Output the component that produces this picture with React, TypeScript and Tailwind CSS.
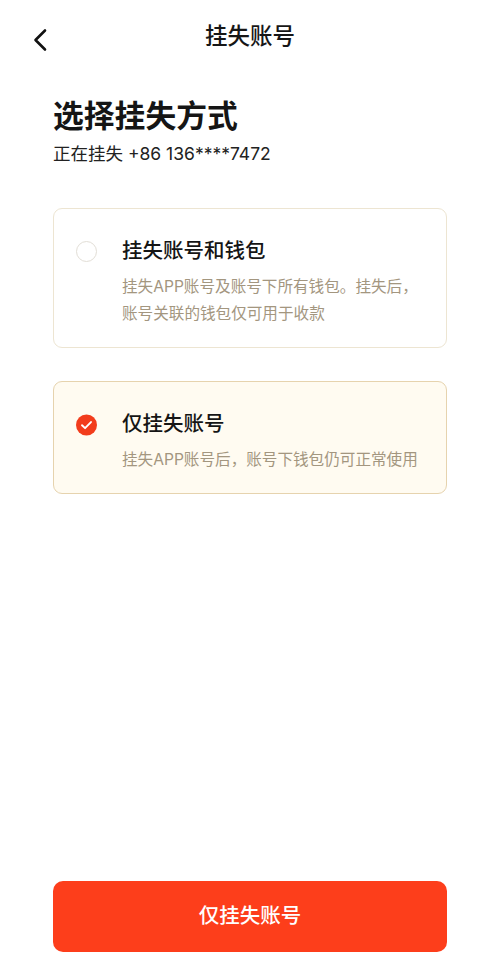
import React, { useState } from 'react'

const font = { fontFamily: 'Inter, "Noto Sans CJK SC", "Noto Sans", sans-serif' }

interface OptionProps {
  title: string
  lines: string[]
  checked: boolean
  onClick: () => void
}

function Option({ title, lines, checked, onClick }: OptionProps) {
  return (
    <button
      type="button"
      onClick={onClick}
      className={`flex w-full items-start rounded-[9px] border pl-[22px] pr-4 pt-[28px] pb-[20px] text-left ${
        checked ? 'border-[#e6d3ae] bg-[#fffbf1]' : 'border-[#ede5d2] bg-white'
      }`}
    >
      <div className="mt-[4px] flex h-[21px] w-[21px] shrink-0 items-center justify-center">
        {checked ? (
          <svg viewBox="0 0 22 22" className="h-[22px] w-[22px]">
            <circle cx="11" cy="11" r="11" fill="#f23c1c" />
            <path d="M6.3 11.2l3.2 3.1 6.2-6.4" fill="none" stroke="#fff" strokeWidth="2" strokeLinecap="round" strokeLinejoin="round" />
          </svg>
        ) : (
          <span className="h-[21px] w-[21px] rounded-full border-[1.5px] border-[#e2ded6]" />
        )}
      </div>
      <div className="ml-[25px] flex flex-col">
        <p className="text-[20.5px] font-medium leading-[28px] text-[#151515]">{title}</p>
        <div className="mt-[8px] text-[15.6px] leading-[27px] text-[#a3967f]">
          {lines.map((l) => (
            <p key={l} className="whitespace-nowrap">{l}</p>
          ))}
        </div>
      </div>
    </button>
  )
}

export default function App() {
  const [mode, setMode] = useState<'all' | 'account'>('account')

  return (
    <div className="flex h-[971px] w-[500px] flex-col bg-white" style={font}>
      {/* nav bar */}
      <div className="relative flex h-[75px] items-center justify-center pb-[4px]">
        <button type="button" className="absolute left-[28px] top-[24px] p-1">
          <svg viewBox="0 0 16 24" className="h-[24px] w-[16px]">
            <path d="M13 2.5L3.5 12l9.5 9.5" fill="none" stroke="#111" strokeWidth="2.6" strokeLinecap="round" strokeLinejoin="round" />
          </svg>
        </button>
        <h1 className="text-[22.5px] font-medium text-[#161616]">挂失账号</h1>
      </div>

      <div className="flex flex-1 flex-col px-[53px]">
        <h2 className="mt-[21px] text-[30.8px] font-bold leading-[40px] text-[#151515]">选择挂失方式</h2>
        <p className="mt-[5px] text-[17.5px] leading-[26px] text-[#222]">正在挂失 +86 136****7472</p>

        <div className="mt-[41px] flex flex-col gap-[33px]">
          <Option
            title="挂失账号和钱包"
            lines={['挂失APP账号及账号下所有钱包。挂失后，', '账号关联的钱包仅可用于收款']}
            checked={mode === 'all'}
            onClick={() => setMode('all')}
          />
          <Option
            title="仅挂失账号"
            lines={['挂失APP账号后，账号下钱包仍可正常使用']}
            checked={mode === 'account'}
            onClick={() => setMode('account')}
          />
        </div>

        <div className="flex-1" />

        <button
          type="button"
          className="mb-[19px] h-[71px] w-full rounded-[10px] bg-[#fd3e1b] text-[20.5px] font-medium text-white"
        >
          {mode === 'account' ? '仅挂失账号' : '挂失账号和钱包'}
        </button>
      </div>
    </div>
  )
}
